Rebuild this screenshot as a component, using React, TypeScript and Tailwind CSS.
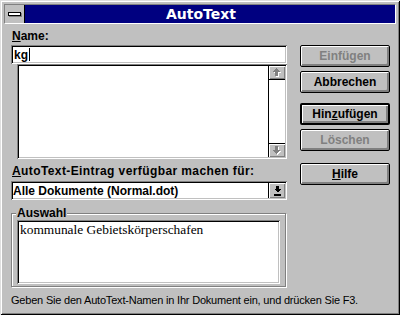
import React from 'react';
import clsx from 'clsx';

const sunken =
  'shadow-[inset_1px_1px_0_#808080,inset_-1px_-1px_0_#fff,inset_2px_2px_0_#000,inset_-2px_-2px_0_#c0c0c0]';
const raised = 'shadow-[inset_1px_1px_0_#fff,inset_-1px_-1px_0_#808080]';

const UpArrow = () => (
  <svg width="10" height="10" viewBox="0 0 10 10" shapeRendering="crispEdges">
    <polygon points="5.5,1 10,5 7,5 7,9 4,9 4,5 1,5" fill="#fff" />
    <polygon points="4.5,0 9,4 6,4 6,8 3,8 3,4 0,4" fill="#808080" />
  </svg>
);

const DownArrow = () => (
  <svg width="10" height="10" viewBox="0 0 10 10" shapeRendering="crispEdges">
    <polygon points="4,1 7,1 7,5 10,5 5.5,9 1,5 4,5" fill="#fff" />
    <polygon points="3,0 6,0 6,4 9,4 4.5,8 0,4 3,4" fill="#808080" />
  </svg>
);

const ComboArrow = () => (
  <svg width="7" height="10" viewBox="0 0 7 10" shapeRendering="crispEdges">
    <polygon points="2,0 5,0 5,3 7,3 3.5,6.5 0,3 2,3" fill="#000" />
    <rect x="0" y="8" width="7" height="2" fill="#000" />
  </svg>
);

interface BtnProps {
  children: React.ReactNode;
  disabled?: boolean;
  isDefault?: boolean;
  className?: string;
}

const Btn: React.FC<BtnProps> = ({ children, disabled, isDefault, className }) => (
  <div
    className={clsx(
      'h-[22px] w-[90px] flex items-center justify-center rounded-[2px] border-black bg-[#c0c0c0] text-[12px] font-bold leading-[14px]',
      'shadow-[inset_1px_1px_0_#fff,inset_-1px_-1px_0_#808080,inset_-2px_-2px_0_#808080]',
      isDefault ? 'border-2' : 'border',
      disabled ? 'text-[#808080]' : 'text-black',
      className
    )}
  >
    {children}
  </div>
);

export default function App() {
  return (
    <div className="w-[400px] h-[315px] bg-[#c0c0c0] p-[4px] flex flex-col font-['Liberation_Sans',Arial,sans-serif] text-black shadow-[inset_1px_1px_0_#dfdfdf,inset_-1px_-1px_0_#000,inset_2px_2px_0_#fff,inset_-2px_-2px_0_#808080]">
      {/* Title bar */}
      <div className="flex h-[20px] border border-t-[#808080] border-l-[#808080] border-r-white border-b-white">
        <div className="w-[20px] flex items-center justify-center bg-[#c0c0c0] border-r border-black">
          <div className="w-[13px] h-[4px] border border-black bg-white shadow-[1px_1px_0_#808080]" />
        </div>
        <div className="flex-1 bg-[#000080] flex items-center justify-center pr-[18px] text-white font-['DejaVu_Sans',sans-serif] font-bold text-[14px] leading-[18px]">
          AutoText
        </div>
      </div>

      <div className="flex">
        {/* Left column */}
        <div className="ml-[7px] w-[276px] flex flex-col">
          <div className="mt-[5px] h-[14px] leading-[14px] pl-[1px] text-[12px] font-bold">
            <span className="underline">N</span>ame:
          </div>
          <div className={`mt-[2px] h-[19px] bg-white ${sunken} flex items-center pl-[3px] text-[12px] font-bold`}>
            kg
            <span className="ml-[1px] h-[13px] w-px bg-black" />
          </div>
          <div className={`ml-[6px] h-[95px] bg-white ${sunken} flex justify-end p-[2px]`}>
            <div className="w-[17px] h-full border-l border-black flex flex-col bg-white">
              <div className={`h-[14px] border-b border-black bg-[#c0c0c0] ${raised} flex items-center justify-center`}>
                <UpArrow />
              </div>
              <div className="flex-1" />
              <div className={`h-[14px] border-t border-black bg-[#c0c0c0] ${raised} flex items-center justify-center`}>
                <DownArrow />
              </div>
            </div>
          </div>

          <div className="mt-[5px] h-[14px] leading-[14px] pl-[1px] text-[12px] font-bold tracking-[0.4px]">
            <span className="underline">A</span>utoText-Eintrag verfügbar machen für:
          </div>
          <div className={`mt-[3px] h-[19px] bg-white ${sunken} flex p-[2px]`}>
            <div className="flex-1 flex items-center text-[12px] font-bold">Alle Dokumente (Normal.dot)</div>
            <div className={`w-[17px] border-l border-black bg-[#c0c0c0] ${raised} flex items-center justify-center`}>
              <ComboArrow />
            </div>
          </div>

          <fieldset className="mt-[6px] w-[275px] border border-[#808080] shadow-[1px_1px_0_#fff,inset_1px_1px_0_#fff] px-[5px] pb-[2px]">
            <legend className="ml-[-1px] px-[1px] bg-[#c0c0c0] text-[12px] font-bold leading-[14px]">Auswahl</legend>
            <div className={`h-[64px] bg-white ${sunken} pl-[3px] pt-[2px] font-['Liberation_Serif','Times_New_Roman',serif] text-[13.4px] leading-[16px]`}>
              kommunale Gebietskörperschafen
            </div>
          </fieldset>
        </div>

        {/* Buttons */}
        <div className="ml-[13px] pt-[21px] flex flex-col">
          <Btn disabled>Einfügen</Btn>
          <Btn className="mt-[4px]">Abbrechen</Btn>
          <Btn isDefault className="mt-[10px]">
            Hin<span className="underline">z</span>ufügen
          </Btn>
          <Btn disabled className="mt-[4px]">Löschen</Btn>
          <Btn className="mt-[12px]">
            <span className="underline">H</span>ilfe
          </Btn>
        </div>
      </div>

      <div className="mt-[7px] pl-[7px] text-[11px] leading-[13px] tracking-[-0.2px]">
        Geben Sie den AutoText-Namen in Ihr Dokument ein, und drücken Sie F3.
      </div>
    </div>
  );
}
